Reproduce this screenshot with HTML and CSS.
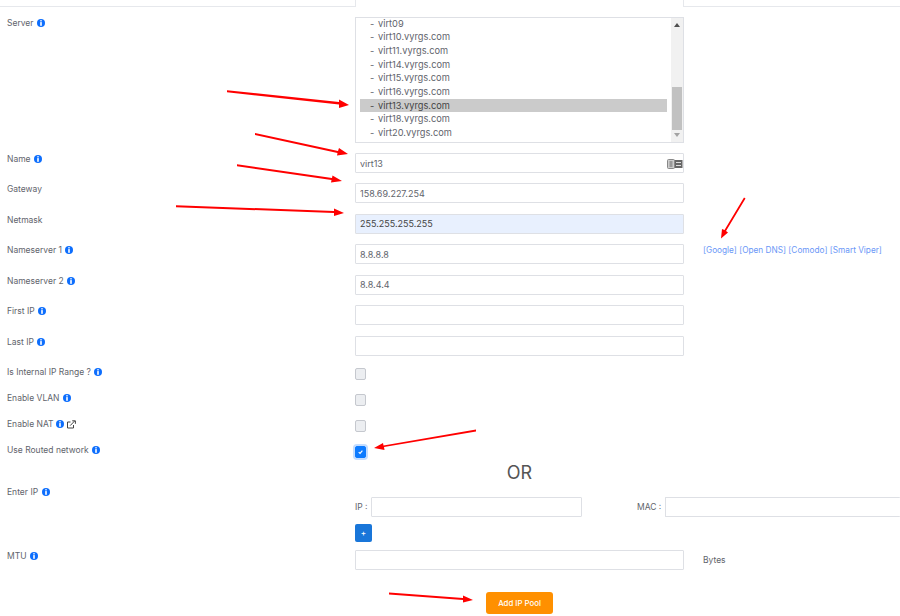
FILE: index.html
```html
<!DOCTYPE html>
<html lang="en">
<head>
<meta charset="utf-8">
<title>Add IP Pool</title>
<link rel="stylesheet" href="styles.css">
</head>
<body>
<div class="tabs"><div class="tab-left"></div><div class="tab-active"></div><div class="tab-right"></div></div>
<form class="form">
  <div class="row row-server">
    <label class="label">Server <svg class="info" viewBox="0 0 8 8"><circle cx="4" cy="4" r="4"/><rect x="3.2" y="1.2" width="1.6" height="1.2" fill="#fff"/><rect x="3.2" y="3.1" width="1.6" height="3.7" fill="#fff"/></svg></label>
    <div class="listbox">
      <ul class="options">
        <li>virt09</li>
        <li>virt10.vyrgs.com</li>
        <li>virt11.vyrgs.com</li>
        <li>virt14.vyrgs.com</li>
        <li>virt15.vyrgs.com</li>
        <li>virt16.vyrgs.com</li>
        <li class="selected">virt13.vyrgs.com</li>
        <li>virt18.vyrgs.com</li>
        <li>virt20.vyrgs.com</li>
      </ul>
      <div class="scrollbar">
        <span class="arrow-up"></span>
        <span class="thumb"></span>
        <span class="arrow-down"></span>
      </div>
    </div>
  </div>
  <div class="row">
    <label class="label">Name <svg class="info" viewBox="0 0 8 8"><circle cx="4" cy="4" r="4"/><rect x="3.2" y="1.2" width="1.6" height="1.2" fill="#fff"/><rect x="3.2" y="3.1" width="1.6" height="3.7" fill="#fff"/></svg></label>
    <div class="field">
      <input class="input" value="virt13">
      <svg class="autofill" viewBox="0 0 16 10"><rect x="5" y="1" width="10.5" height="8" fill="#666"/><rect x="0.5" y="0.5" width="7" height="9" rx="1" fill="#ccc" stroke="#888"/><rect x="2.5" y="2.5" width="3" height="1" fill="#666"/><rect x="2.5" y="4.5" width="3" height="1" fill="#666"/><rect x="2.5" y="6.5" width="3" height="1" fill="#666"/><rect x="9" y="3" width="5" height="1" fill="#ddd"/><rect x="9" y="6" width="5" height="1" fill="#ddd"/></svg>
    </div>
  </div>
  <div class="row"><label class="label">Gateway</label><input class="input" value="158.69.227.254"></div>
  <div class="row"><label class="label">Netmask</label><input class="input autofilled" value="255.255.255.255"></div>
  <div class="row">
    <label class="label">Nameserver 1 <svg class="info" viewBox="0 0 8 8"><circle cx="4" cy="4" r="4"/><rect x="3.2" y="1.2" width="1.6" height="1.2" fill="#fff"/><rect x="3.2" y="3.1" width="1.6" height="3.7" fill="#fff"/></svg></label>
    <input class="input" value="8.8.8.8">
    <div class="dns-links"><a href="#">[Google]</a> <a href="#">[Open DNS]</a> <a href="#">[Comodo]</a> <a href="#">[Smart Viper]</a></div>
  </div>
  <div class="row">
    <label class="label">Nameserver 2 <svg class="info" viewBox="0 0 8 8"><circle cx="4" cy="4" r="4"/><rect x="3.2" y="1.2" width="1.6" height="1.2" fill="#fff"/><rect x="3.2" y="3.1" width="1.6" height="3.7" fill="#fff"/></svg></label>
    <input class="input" value="8.8.4.4">
  </div>
  <div class="row">
    <label class="label">First IP <svg class="info" viewBox="0 0 8 8"><circle cx="4" cy="4" r="4"/><rect x="3.2" y="1.2" width="1.6" height="1.2" fill="#fff"/><rect x="3.2" y="3.1" width="1.6" height="3.7" fill="#fff"/></svg></label>
    <input class="input">
  </div>
  <div class="row row-last-ip">
    <label class="label">Last IP <svg class="info" viewBox="0 0 8 8"><circle cx="4" cy="4" r="4"/><rect x="3.2" y="1.2" width="1.6" height="1.2" fill="#fff"/><rect x="3.2" y="3.1" width="1.6" height="3.7" fill="#fff"/></svg></label>
    <input class="input">
  </div>
  <div class="row row-check">
    <label class="label">Is Internal IP Range ? <svg class="info" viewBox="0 0 8 8"><circle cx="4" cy="4" r="4"/><rect x="3.2" y="1.2" width="1.6" height="1.2" fill="#fff"/><rect x="3.2" y="3.1" width="1.6" height="3.7" fill="#fff"/></svg></label>
    <span class="check"></span>
  </div>
  <div class="row row-check">
    <label class="label">Enable VLAN <svg class="info" viewBox="0 0 8 8"><circle cx="4" cy="4" r="4"/><rect x="3.2" y="1.2" width="1.6" height="1.2" fill="#fff"/><rect x="3.2" y="3.1" width="1.6" height="3.7" fill="#fff"/></svg></label>
    <span class="check"></span>
  </div>
  <div class="row row-check">
    <label class="label label-tight">Enable NAT <svg class="info" viewBox="0 0 8 8"><circle cx="4" cy="4" r="4"/><rect x="3.2" y="1.2" width="1.6" height="1.2" fill="#fff"/><rect x="3.2" y="3.1" width="1.6" height="3.7" fill="#fff"/></svg> <svg class="ext" viewBox="0 0 9 9"><path d="M6.5 5v3h-6v-6h3" fill="none" stroke="#444" stroke-width="1"/><path d="M3.2 5.6l4.4-4.6M5.2 0.8h3.2v3" fill="none" stroke="#444" stroke-width="1"/></svg></label>
    <span class="check"></span>
  </div>
  <div class="row row-check">
    <label class="label">Use Routed network <svg class="info" viewBox="0 0 8 8"><circle cx="4" cy="4" r="4"/><rect x="3.2" y="1.2" width="1.6" height="1.2" fill="#fff"/><rect x="3.2" y="3.1" width="1.6" height="3.7" fill="#fff"/></svg></label>
    <span class="check checked"><svg viewBox="0 0 10 10"><path d="M3 5.2l1.5 1.4 2.6-3" fill="none" stroke="#fff" stroke-width="1.3"/></svg></span>
  </div>
  <div class="or">OR</div>
  <div class="row row-ip">
    <label class="label">Enter IP <svg class="info" viewBox="0 0 8 8"><circle cx="4" cy="4" r="4"/><rect x="3.2" y="1.2" width="1.6" height="1.2" fill="#fff"/><rect x="3.2" y="3.1" width="1.6" height="3.7" fill="#fff"/></svg></label>
    <div class="ip-block">
      <div class="ip-line">
        <span class="ip-label">IP :</span><input class="input ip-input">
        <span class="mac-label">MAC :</span><input class="input mac-input">
      </div>
      <button type="button" class="add-row">+</button>
    </div>
  </div>
  <div class="row row-mtu">
    <label class="label">MTU <svg class="info" viewBox="0 0 8 8"><circle cx="4" cy="4" r="4"/><rect x="3.2" y="1.2" width="1.6" height="1.2" fill="#fff"/><rect x="3.2" y="3.1" width="1.6" height="3.7" fill="#fff"/></svg></label>
    <input class="input">
    <span class="bytes">Bytes</span>
  </div>
  <div class="actions"><button type="button" class="submit">Add IP Pool</button></div>
</form>
<svg class="annotations" viewBox="0 0 900 616">
  <g fill="#f00">
    <polygon points="227,90.2 339,102 339,99.5 349,105 339,108 339,104.5 227,92.2"/>
    <polygon points="255,133 338,151 339,148 348,154 337,155.5 337.5,153 255,135"/>
    <polygon points="237,164.2 332,178 332.5,175.5 342,181 331,182.5 331.5,180 237,166.2"/>
    <polygon points="176,205.2 334,211 334,208.5 344,213 334,216 334,213 176,207.2"/>
    <polygon points="744,197.5 745.5,198.5 726,231 728,232.5 721,238.5 722,229 724.5,230"/>
    <polygon points="476,429.5 476,431.5 384,447 384.5,450 374,448 383,443 383.5,445.5"/>
    <polygon points="389,592.5 463,598 463,595.5 473,600 463,602.5 463,600 389,594.5"/>
  </g>
</svg>
</body>
</html>
```

FILE: styles.css
```css
* { box-sizing: border-box; }
html, body { margin: 0; padding: 0; background: #fff; }
body {
  width: 900px;
  height: 616px;
  overflow: hidden;
  position: relative;
  font-family: "Inter", "Open Sans", sans-serif;
  font-size: 8.5px;
  color: #5f646c;
}
.tabs { display: flex; height: 7px; }
.tab-left { width: 355px; border-bottom: 1px solid #e6e8ec; }
.tab-active { width: 329px; border-left: 1px solid #e6e8ec; border-right: 1px solid #e6e8ec; }
.tab-right { flex: 1; border-bottom: 1px solid #e6e8ec; }
.form { padding: 10px 0 0 7px; }
.row {
  display: grid;
  grid-template-columns: 348px 329px 216px;
  align-items: start;
  height: 20px;
  margin-bottom: 10.49px;
}
.row-server { height: 126px; margin-bottom: 10px; }
.row-last-ip { margin-bottom: 12.59px; }
.row-check { height: 12px; margin-bottom: 14px; }
.label { display: flex; align-items: center; gap: 3.5px; height: 12px; line-height: 12px; white-space: nowrap; }
.row-check .label { margin-top: -2px; }
.label-tight { gap: 2.5px; }
.info { width: 8px; height: 8px; fill: #0d6efd; flex: none; }
.ext { width: 9px; height: 9px; flex: none; }
.listbox {
  width: 329px;
  height: 126px;
  border: 1px solid #dee0e5;
  display: flex;
  overflow: hidden;
}
.options {
  flex: 1;
  list-style: none;
  margin: -1.2px 0 0;
  padding: 0 4px;
  font-size: 9.25px;
}
.options li {
  height: 13.67px;
  line-height: 13.67px;
  padding-left: 18px;
  position: relative;
}
.options li::before { content: "-"; position: absolute; left: 10px; }
.options .selected { background: #cbcbcb; color: #444; }
.scrollbar {
  width: 12px;
  background: #f1f1f1;
  display: flex;
  flex-direction: column;
  align-items: center;
  position: relative;
}
.arrow-up { border: 3px solid transparent; border-top: 0; border-bottom: 4px solid #505050; margin-top: 5px; }
.thumb { position: absolute; top: 69px; left: 1px; width: 10px; height: 43px; background: #c1c1c1; }
.arrow-down { position: absolute; bottom: 5px; border: 3px solid transparent; border-bottom: 0; border-top: 4px solid #a3a3a3; }
.field { position: relative; width: 329px; }
.input {
  display: block;
  width: 329px;
  height: 20px;
  border: 1px solid #dee0e5;
  border-radius: 1px;
  padding: 0 4px;
  font: inherit;
  font-size: 9px;
  color: #5f646c;
  background: #fff;
  outline: 0;
}
.autofilled { background: #e8f0fe; color: #444; }
.autofill { position: absolute; right: 1px; top: 6px; width: 16px; height: 10px; }
.dns-links { padding-left: 19px; margin-top: 1px; line-height: 10px; white-space: nowrap; font-size: 8.25px; }
.dns-links a { color: #6a97f7; text-decoration: none; }
.check {
  display: block;
  width: 11px;
  height: 12px;
  border: 1px solid #c5c8ce;
  border-radius: 2px;
  background: #eceef1;
}
.check.checked {
  background: #0d7bff;
  border-color: #0d7bff;
  box-shadow: 0 0 0 2px #c4ddff;
}
.check svg { display: block; width: 9px; height: 10px; }
.or {
  font-size: 18px;
  line-height: 22px;
  height: 22px;
  width: 329px;
  margin-left: 348px;
  margin-top: -10.9px;
  text-align: center;
  color: #555;
}
.row-ip { height: 45px; margin-top: 13px; margin-bottom: 8px; grid-template-columns: 348px 545px; }
.row-ip .label { margin-top: -11px; }
.ip-block { display: flex; flex-direction: column; align-items: flex-start; gap: 7px; }
.ip-line { display: flex; align-items: center; height: 20px; }
.ip-label { width: 16px; flex: none; }
.ip-input { width: 211px; flex: none; }
.mac-label { margin-left: 55px; width: 28px; flex: none; }
.mac-input { width: 235px; flex: none; border-right: 0; }
.add-row {
  width: 17px;
  height: 18px;
  padding: 0;
  border: 0;
  border-radius: 2px;
  background: #1976d9;
  color: #fff;
  font: 500 8px "Inter", sans-serif;
}
.bytes { padding-left: 19px; line-height: 20px; }
.row-mtu { margin-bottom: 0; }
.actions { display: flex; width: 329px; margin-left: 348px; justify-content: center; padding-top: 22px; }
.submit {
  width: 67px;
  height: 22px;
  padding: 0;
  border: 0;
  border-radius: 3px;
  background: #ff9000;
  color: #fff;
  font: 500 7.8px "Inter", sans-serif;
}
.annotations { position: absolute; left: 0; top: 0; width: 900px; height: 616px; pointer-events: none; }
```
